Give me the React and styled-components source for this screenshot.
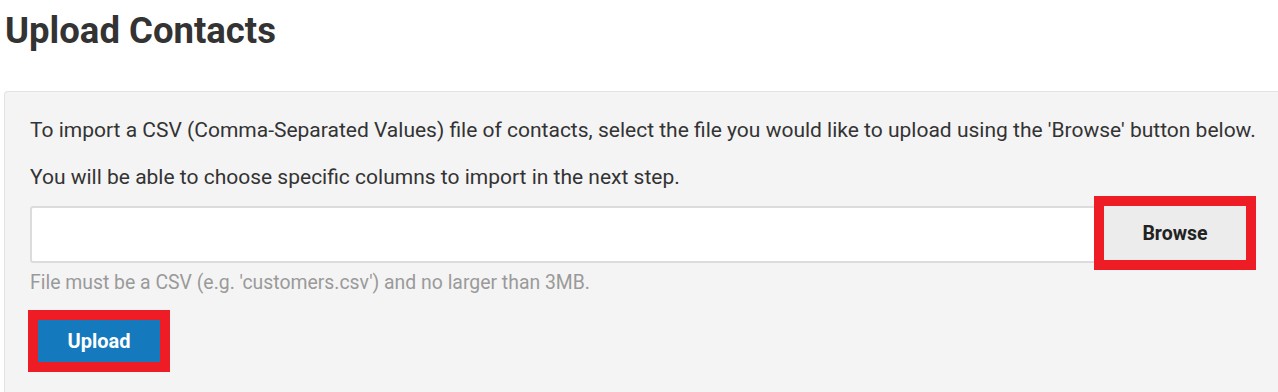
import React from 'react';
import styled, { createGlobalStyle } from 'styled-components';

const GlobalStyle = createGlobalStyle`
	html, body {
		margin: 0;
		padding: 0;
		background: #ffffff;
	}
	body {
		font-family: Roboto, 'Liberation Sans', Arial, sans-serif;
		color: #333333;
	}
`;

const Page = styled.div`
	padding: 0 0 0 4px;
	width: 1278px;
	box-sizing: border-box;
`;

const Title = styled.h1`
	margin: 0;
	padding: 10px 0 0 1px;
	height: 91px;
	box-sizing: border-box;
	font-size: 36.5px;
	line-height: 42px;
	font-weight: 700;
	color: #333333;
`;

const Panel = styled.div`
	background: #f4f4f4;
	border: 1px solid #e3e3e3;
	border-right: none;
	border-radius: 4px 0 0 4px;
	padding: 24px 0 30px 25px;
	height: 320px;
	box-sizing: border-box;
`;

const Text = styled.p`
	margin: 0 0 ${(p) => p.gap || 0}px;
	font-size: 21px;
	line-height: 28px;
	color: #333333;
`;

const InputGroup = styled.div`
	display: flex;
	align-items: flex-start;
	width: 1226px;
	margin-top: 15px;
`;

const FileField = styled.div`
	flex: 1;
	height: 57px;
	background: #ffffff;
	border: 2px solid #dcdcdc;
	border-right: none;
	border-radius: 3px 0 0 3px;
	box-sizing: border-box;
`;

const Marked = styled.div`
	border: 10px solid #ee1c25;
	display: flex;
	width: fit-content;
	margin: ${(p) => p.offset || '0'};
`;

const Button = styled.button`
	width: ${(p) => p.w}px;
	height: ${(p) => p.h}px;
	border: none;
	margin: 0;
	padding: 0;
	font-family: Roboto, 'Liberation Sans', Arial, sans-serif;
	font-weight: 700;
	font-size: ${(p) => (p.primary ? 20 : 19.5)}px;
	background: ${(p) => (p.primary ? '#1479bd' : '#ececec')};
	color: ${(p) => (p.primary ? '#ffffff' : '#222222')};
	cursor: pointer;
`;

const Hint = styled.p`
	margin: 0;
	font-size: 19.4px;
	line-height: 26px;
	color: #9a9a9a;
`;

export default function App() {
	return (
		<Page>
			<GlobalStyle />
			<Title>Upload Contacts</Title>
			<Panel>
				<Text gap={19}>
					To import a CSV (Comma-Separated Values) file of contacts, select the file you would like to upload using
					the 'Browse' button below.
				</Text>
				<Text>You will be able to choose specific columns to import in the next step.</Text>
				<InputGroup>
					<FileField />
					<Marked offset="-10px 0 0 0">
						<Button w={142} h={54}>
							Browse
						</Button>
					</Marked>
				</InputGroup>
				<Hint>File must be a CSV (e.g. 'customers.csv') and no larger than 3MB.</Hint>
				<Marked offset="14px 0 0 -2px">
					<Button primary w={122} h={42}>
						Upload
					</Button>
				</Marked>
			</Panel>
		</Page>
	);
}
